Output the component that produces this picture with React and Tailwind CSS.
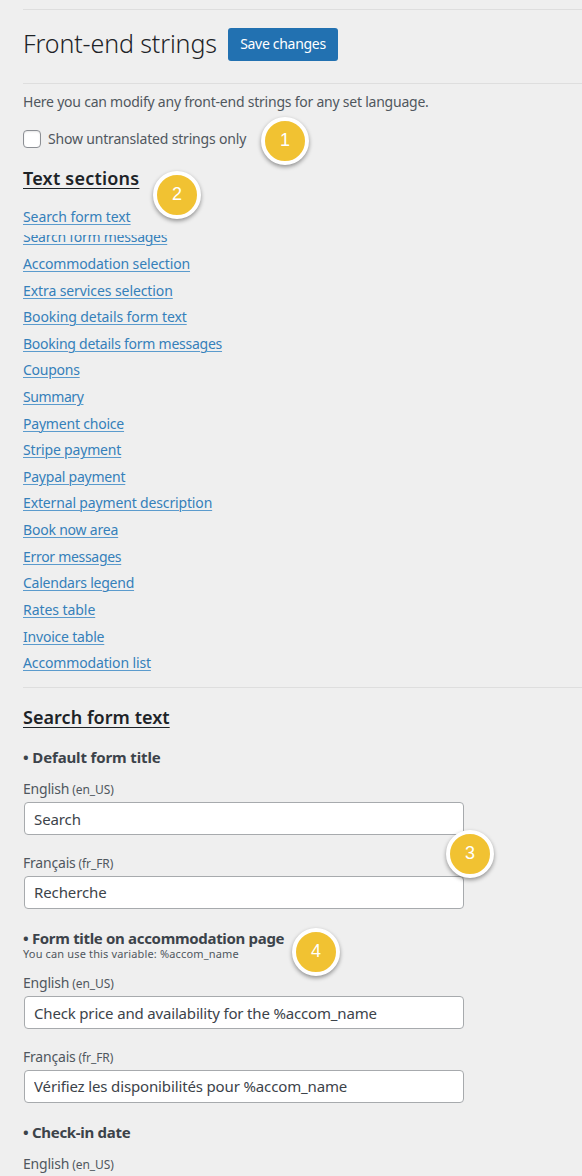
import React, { useState } from 'react';

const sections = [
  { name: 'Accommodation selection', cls: 'tracking-[-0.13px]' },
  { name: 'Extra services selection', cls: 'tracking-[-0.09px]' },
  { name: 'Booking details form text', cls: 'tracking-[-0.09px]' },
  { name: 'Booking details form messages', cls: 'tracking-[-0.25px]' },
  { name: 'Coupons', cls: 'tracking-[-0.25px]' },
  { name: 'Summary', cls: 'tracking-[-0.4px]' },
  { name: 'Payment choice', cls: 'tracking-[-0.2px]' },
  { name: 'Stripe payment', cls: 'tracking-[-0.17px]' },
  { name: 'Paypal payment', cls: 'tracking-[-0.23px]' },
  { name: 'External payment description', cls: 'tracking-[-0.15px]' },
  { name: 'Book now area', cls: 'tracking-[-0.2px]' },
  { name: 'Error messages', cls: 'tracking-[-0.3px]' },
  { name: 'Calendars legend', cls: 'tracking-[-0.23px]' },
  { name: 'Rates table', cls: 'tracking-[-0.06px]' },
  { name: 'Invoice table', cls: 'tracking-[-0.2px]' },
  { name: 'Accommodation list', cls: 'tracking-[-0.14px]' },
];

const linkStyle = 'underline decoration-1 underline-offset-2 decoration-[#5b9bcd] text-[#3580ba]';

const Badge = ({ number, className }) => (
  <div className={`absolute flex size-12 items-center justify-center rounded-full border-4 border-white bg-[#f1c232] pb-0.5 font-['Liberation_Sans',sans-serif] text-[18px] text-white shadow-[0_2px_4px_rgba(0,0,0,0.4)] ${className}`}>
    {number}
  </div>
);

const Field = ({ language, locale, value, textClass = '' }) => (
  <label className="block h-[73.5px]">
    <span className="flex h-[23px] items-baseline text-[14px] leading-[20px] tracking-[-0.2px] text-[#50575e]">
      {language}
      <span className="ml-[3px] text-[12px] tracking-[-0.1px]">({locale})</span>
    </span>
    <input
      className={`ml-px block h-[33px] w-[440px] rounded-[4px] border border-[#a7aaad] bg-white px-[9px] text-[15px] text-[#3c434a] outline-none ${textClass}`}
      defaultValue={value}
    />
  </label>
);

const App = () => {
  const [untranslated, setUntranslated] = useState(false);

  return (
    <div className="relative h-[1176px] overflow-hidden bg-[#efefef] pl-[23px] pt-[9px] font-['Noto_Sans',sans-serif] text-[14px] text-[#50575e]">
      <div className="flex h-[75px] items-center border-y border-[#dedede] pb-[5px]">
        <h1 className="w-[205px] whitespace-nowrap text-[25px] font-light tracking-[-0.12px] text-[#1d2327]">Front-end strings</h1>
        <button className="h-[33px] w-[110px] whitespace-nowrap rounded-[3px] bg-[#2271b1] pb-[2px] text-[14px] tracking-[-0.3px] text-white">Save changes</button>
      </div>

      <p className="mt-[8px] h-[20px] whitespace-nowrap leading-[20px] tracking-[-0.23px]">
        Here you can modify any front-end strings for any set language.
      </p>

      <label className="mt-[17px] flex h-[20px] items-center">
        <input
          type="checkbox"
          checked={untranslated}
          onChange={() => setUntranslated(!untranslated)}
          className="mr-[7px] size-[18px] appearance-none rounded-[4px] border border-[#8c8f94] bg-white shadow-[inset_0_1px_2px_rgba(0,0,0,0.1)]"
        />
        <span className="pb-[2px] tracking-[-0.18px]">Show untranslated strings only</span>
      </label>

      <h2 className="mt-[16px] h-[26px] text-[18px] font-semibold leading-[26px] tracking-[0.22px] text-[#1d2327] underline decoration-1 underline-offset-3">Text sections</h2>

      <div className="mt-[15px] h-[29px] leading-[22px]">
        <a className={`${linkStyle} tracking-[-0.08px]`}>Search form text</a>
      </div>
      {/* the row is partly scrolled under the one above */}
      <div className="flex h-[15px] items-end overflow-hidden leading-[22px]">
        <a className={`${linkStyle} mb-[2px] tracking-[-0.25px]`}>Search form messages</a>
      </div>
      <ul>
        {sections.map((section) => (
          <li key={section.name} className="h-[26.62px] leading-[27px]">
            <a className={`${linkStyle} ${section.cls}`}>{section.name}</a>
          </li>
        ))}
      </ul>

      <div className="mt-[11px] border-t border-[#dedede]" />

      <h2 className="mt-[16px] h-[26px] text-[18px] font-semibold leading-[26px] tracking-[0.04px] text-[#1d2327] underline decoration-1 underline-offset-3">Search form text</h2>

      <h3 className="mt-[17px] h-[32.4px] text-[15px] font-bold leading-[20px] tracking-[-0.13px] text-[#3c434a]">• Default form title</h3>
      <Field language="English" locale="en_US" value="Search" textClass="tracking-[-0.1px]" />
      <Field language="Français" locale="fr_FR" value="Recherche" textClass="tracking-[-0.1px]" />

      <h3 className="mt-[4px] h-[16px] text-[15px] font-bold leading-[16px] tracking-[-0.32px] text-[#3c434a]">• Form title on accommodation page</h3>
      <p className="h-[27px] text-[11px] leading-[15px] tracking-[0.15px]">You can use this variable: %accom_name</p>
      <Field language="English" locale="en_US" value="Check price and availability for the %accom_name" textClass="tracking-[-0.17px]" />
      <Field language="Français" locale="fr_FR" value="Vérifiez les disponibilités pour %accom_name" textClass="tracking-[-0.14px]" />

      <h3 className="mt-[2px] h-[32px] text-[15px] font-bold leading-[20px] tracking-[-0.3px] text-[#3c434a]">• Check-in date</h3>
      <Field language="English" locale="en_US" value="" />

      <Badge number={1} className="left-[261px] top-[117px]" />
      <Badge number={2} className="left-[153px] top-[171px]" />
      <Badge number={3} className="left-[446px] top-[830px]" />
      <Badge number={4} className="left-[292px] top-[928px]" />
    </div>
  );
};

export default App;
